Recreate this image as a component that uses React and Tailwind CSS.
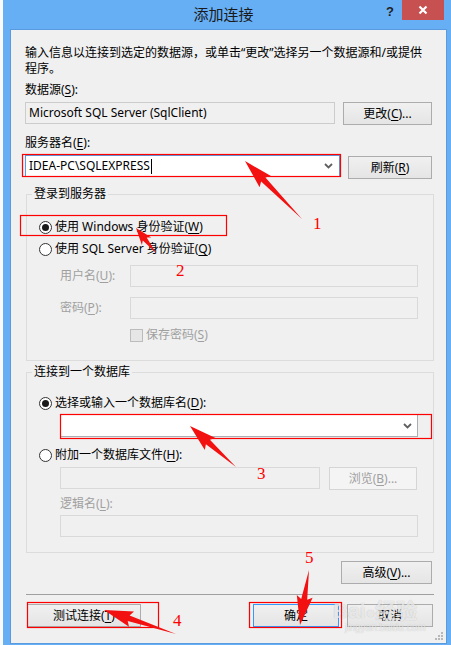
import React from "react";

const FONT = "font-['Segoe_UI','Noto_Sans','Noto_Sans_CJK_SC',sans-serif]";

function Key({ children }) {
  return <span className="underline underline-offset-[2px] decoration-[1px]">{children}</span>;
}

function Btn({ children, className = "", disabled = false, def = false }) {
  return (
    <div
      className={
        "h-[23px] flex items-center justify-center border text-[12px] leading-[16px] " +
        (disabled
          ? "border-[#D5D5D5] bg-[#F4F4F4] text-[#A0A0A0] "
          : def
          ? "border-[#3399FF] bg-gradient-to-b from-[#F0F0F0] to-[#E5E5E5] text-[#000] "
          : "border-[#ACACAC] bg-gradient-to-b from-[#F0F0F0] to-[#E5E5E5] text-[#000] ") +
        className
      }
    >
      {children}
    </div>
  );
}

function Chevron() {
  return (
    <svg width="9" height="6" viewBox="0 0 9 6">
      <polyline points="1,1 4.5,4.5 8,1" fill="none" stroke="#606060" strokeWidth="1.8" />
    </svg>
  );
}

function Radio({ checked, children, disabled }) {
  return (
    <div className="h-[22px] flex items-center pl-[12px]">
      <div className="w-[13px] h-[13px] rounded-full border border-[#333] bg-white flex items-center justify-center">
        {checked && <div className="w-[7px] h-[7px] rounded-full bg-[#1a1a1a]" />}
      </div>
      <span className={"ml-[3px] text-[12px] leading-[16px] " + (disabled ? "text-[#A0A0A0]" : "text-black")}>{children}</span>
    </div>
  );
}

function arrowPoints(tx, ty, px, py, headLen, headW, shaftW) {
  const dx = px - tx;
  const dy = py - ty;
  const L = Math.hypot(dx, dy);
  const ux = dx / L;
  const uy = dy / L;
  const nx = -uy;
  const ny = ux;
  const bx = px - ux * headLen;
  const by = py - uy * headLen;
  const pts = [
    [tx, ty],
    [bx + nx * shaftW, by + ny * shaftW],
    [bx + nx * headW - ux * 3, by + ny * headW - uy * 3],
    [px, py],
    [bx - nx * headW - ux * 3, by - ny * headW - uy * 3],
    [bx - nx * shaftW, by - ny * shaftW],
  ];
  return pts.map((p) => p[0].toFixed(1) + "," + p[1].toFixed(1)).join(" ");
}

export default function App() {
  return (
    <div className={"relative w-[451px] h-[645px] bg-[#67AFF5] flex overflow-hidden " + FONT}>
      <div className="w-[3px] bg-[#FAFAFA]" />
      <div className="flex-1 flex flex-col pl-[7px] pr-[4px] pb-[1px]">
        {/* title bar */}
        <div className="h-[29px] flex items-start -ml-[7px] -mr-[4px]">
          <div className="flex-1" />
          <div className="pt-[5px] text-[15px] leading-[18px] text-[#1a1a1a]">添加连接</div>
          <div className="flex-1 flex justify-end items-start pr-[7px]">
            <div className="mt-[5px] mr-[8px] text-[13px] leading-[13px] font-bold text-[#222] font-['Liberation_Sans',sans-serif]">?</div>
            <div className="w-[42px] h-[20px] bg-[#C75050] flex items-center justify-center">
              <svg width="10" height="10" viewBox="0 0 10 10">
                <path d="M1.5 1.5 L8.5 8.5 M8.5 1.5 L1.5 8.5" stroke="#fff" strokeWidth="2.2" />
              </svg>
            </div>
          </div>
        </div>

        {/* content */}
        <div className="relative flex-1 bg-[#F0F0F0] border border-[#5A9BE0] flex flex-col pl-[14px] pr-[14px] pt-[15px] text-[12px] leading-[16px] text-black">
          <div>输入信息以连接到选定的数据源，或单击“更改”选择另一个数据源和/或提供</div>
          <div>程序。</div>
          <div className="mt-[5px]">数据源(<Key>S</Key>):</div>
          <div className="mt-[4px] flex items-start justify-between">
            <div className="w-[310px] h-[22px] border border-[#CCCCCC] bg-[#F0F0F0] flex items-center pl-[3px] text-[12px]">
              Microsoft SQL Server (SqlClient)
            </div>
            <Btn className="w-[89px]">
              更改(<Key>C</Key>)...
            </Btn>
          </div>
          <div className="mt-[10px]">服务器名(<Key>E</Key>):</div>
          <div className="mt-[4px] flex items-start justify-between">
            <div className="w-[315px] h-[22px] border border-[#569DE5] bg-white flex items-center pl-[3px] pr-[6px]">
              <span>IDEA-PC\SQLEXPRESS</span>
              <span className="w-[1px] h-[15px] bg-black ml-[1px]" />
              <span className="flex-1" />
              <Chevron />
            </div>
            <Btn className="w-[84px] mt-[1px]">
              刷新(<Key>R</Key>)
            </Btn>
          </div>

          {/* group 1 */}
          <fieldset className="mt-[7px] ml-[1px] -mr-[2px] border border-[#DCDCDC] pb-[16px]">
            <legend className="ml-[5px] px-[2px] leading-[16px]">登录到服务器</legend>
            <div className="mt-[14px]">
              <Radio checked>
                使用 Windows 身份验证(<Key>W</Key>)
              </Radio>
              <Radio>
                使用 SQL Server 身份验证(<Key>Q</Key>)
              </Radio>
            </div>
            <div className="mt-[5px] flex items-center pl-[33px]">
              <span className="w-[70px] text-[#A0A0A0]">
                用户名(<Key>U</Key>):
              </span>
              <div className="w-[288px] h-[22px] border border-[#D9D9D9] bg-[#F0F0F0]" />
            </div>
            <div className="mt-[10px] flex items-center pl-[33px]">
              <span className="w-[70px] text-[#A0A0A0]">
                密码(<Key>P</Key>):
              </span>
              <div className="w-[288px] h-[22px] border border-[#D9D9D9] bg-[#F0F0F0]" />
            </div>
            <div className="mt-[7px] h-[18px] flex items-center pl-[103px]">
              <div className="w-[13px] h-[13px] border border-[#BCBCBC] bg-[#E6E6E6]" />
              <span className="ml-[3px] text-[#A0A0A0]">
                保存密码(<Key>S</Key>)
              </span>
            </div>
          </fieldset>

          {/* group 2 */}
          <fieldset className="mt-[3px] ml-[1px] -mr-[2px] border border-[#DCDCDC] pb-[15px]">
            <legend className="ml-[5px] px-[2px] leading-[16px]">连接到一个数据库</legend>
            <div className="mt-[12px]">
              <Radio checked>
                选择或输入一个数据库名(<Key>D</Key>):
              </Radio>
            </div>
            <div className="ml-[33px] w-[358px] h-[23px] border border-[#ABADB3] bg-white flex items-center justify-end pr-[5px]">
              <Chevron />
            </div>
            <div className="mt-[7px]">
              <Radio>
                附加一个数据库文件(<Key>H</Key>):
              </Radio>
            </div>
            <div className="mt-[1px] ml-[33px] flex items-start">
              <div className="w-[260px] h-[22px] border border-[#D9D9D9] bg-[#F0F0F0]" />
              <Btn disabled className="w-[88px] ml-[9px]">
                浏览(<Key>B</Key>)...
              </Btn>
            </div>
            <div className="mt-[6px] ml-[33px] text-[#A0A0A0]">
              逻辑名(<Key>L</Key>):
            </div>
            <div className="mt-[3px] ml-[33px] w-[358px] h-[22px] border border-[#D9D9D9] bg-[#F0F0F0]" />
          </fieldset>

          <div className="mt-[8px] flex justify-end">
            <Btn className="w-[91px]">
              高级(<Key>V</Key>)...
            </Btn>
          </div>
          <div className="mt-[10px] ml-[1px] -mr-[2px] h-[1px] bg-[#A0A0A0]" />
          <div className="mt-[9px] flex items-start">
            <Btn className="w-[114px] ml-[2px]">
              测试连接(<Key>T</Key>)
            </Btn>
            <div className="flex-1" />
            <Btn def className="w-[86px]">
              确定
            </Btn>
            <Btn className="w-[86px] ml-[8px] -mr-[1px]">取消</Btn>
          </div>

          {/* resize grip */}
          <svg className="absolute right-[2px] bottom-[2px]" width="10" height="10" viewBox="0 0 10 10">
            <rect x="7" y="1" width="2" height="2" fill="#B8B8B8" />
            <rect x="4" y="4" width="2" height="2" fill="#B8B8B8" />
            <rect x="7" y="4" width="2" height="2" fill="#B8B8B8" />
            <rect x="1" y="7" width="2" height="2" fill="#B8B8B8" />
            <rect x="4" y="7" width="2" height="2" fill="#B8B8B8" />
            <rect x="7" y="7" width="2" height="2" fill="#B8B8B8" />
          </svg>
        </div>
      </div>

      {/* watermark */}
      <div className="absolute left-[333px] top-[600px] text-[21px] leading-[22px] font-bold text-white/70 [text-shadow:0_0_1px_rgba(0,0,0,0.25)] pointer-events-none font-['Liberation_Sans','Noto_Sans_CJK_SC',sans-serif]">
        Bai<span className="text-[16px]">●</span>经验
      </div>
      <div className="absolute left-[345px] top-[623px] text-[10px] leading-[10px] text-white/70 [text-shadow:0_0_1px_rgba(0,0,0,0.25)] pointer-events-none font-['Liberation_Sans',sans-serif]">
        jingyan.baidu.com
      </div>

      {/* annotations */}
      <svg className="absolute left-0 top-0 pointer-events-none" width="451" height="645" viewBox="0 0 451 645">
        <g fill="none" stroke="#FF0000" strokeWidth="1.2">
          <rect x="22.5" y="154.5" width="318" height="22" />
          <rect x="20.5" y="215.5" width="206" height="20" />
          <rect x="60.5" y="414.5" width="371" height="24" />
          <rect x="27.5" y="602.5" width="131" height="25" />
          <rect x="249.5" y="602.5" width="92" height="25" />
        </g>
        <g fill="#F21010">
          <polygon points={arrowPoints(302, 219, 245, 161, 26, 8, 3)} />
          <polygon points={arrowPoints(156, 253, 136, 228, 14, 6, 2.5)} />
          <polygon points={arrowPoints(236, 467, 190, 426, 24, 8, 3)} />
          <polygon points={arrowPoints(176, 634, 104, 610, 26, 8, 3)} />
          <polygon points={arrowPoints(309, 570, 300, 625, 26, 8, 3)} />
        </g>
        <g fill="#FF0000" fontFamily="Liberation Serif, serif" fontSize="17">
          <text x="313" y="229">1</text>
          <text x="176" y="276">2</text>
          <text x="257" y="479">3</text>
          <text x="173" y="626">4</text>
          <text x="305" y="563">5</text>
        </g>
      </svg>
    </div>
  );
}
